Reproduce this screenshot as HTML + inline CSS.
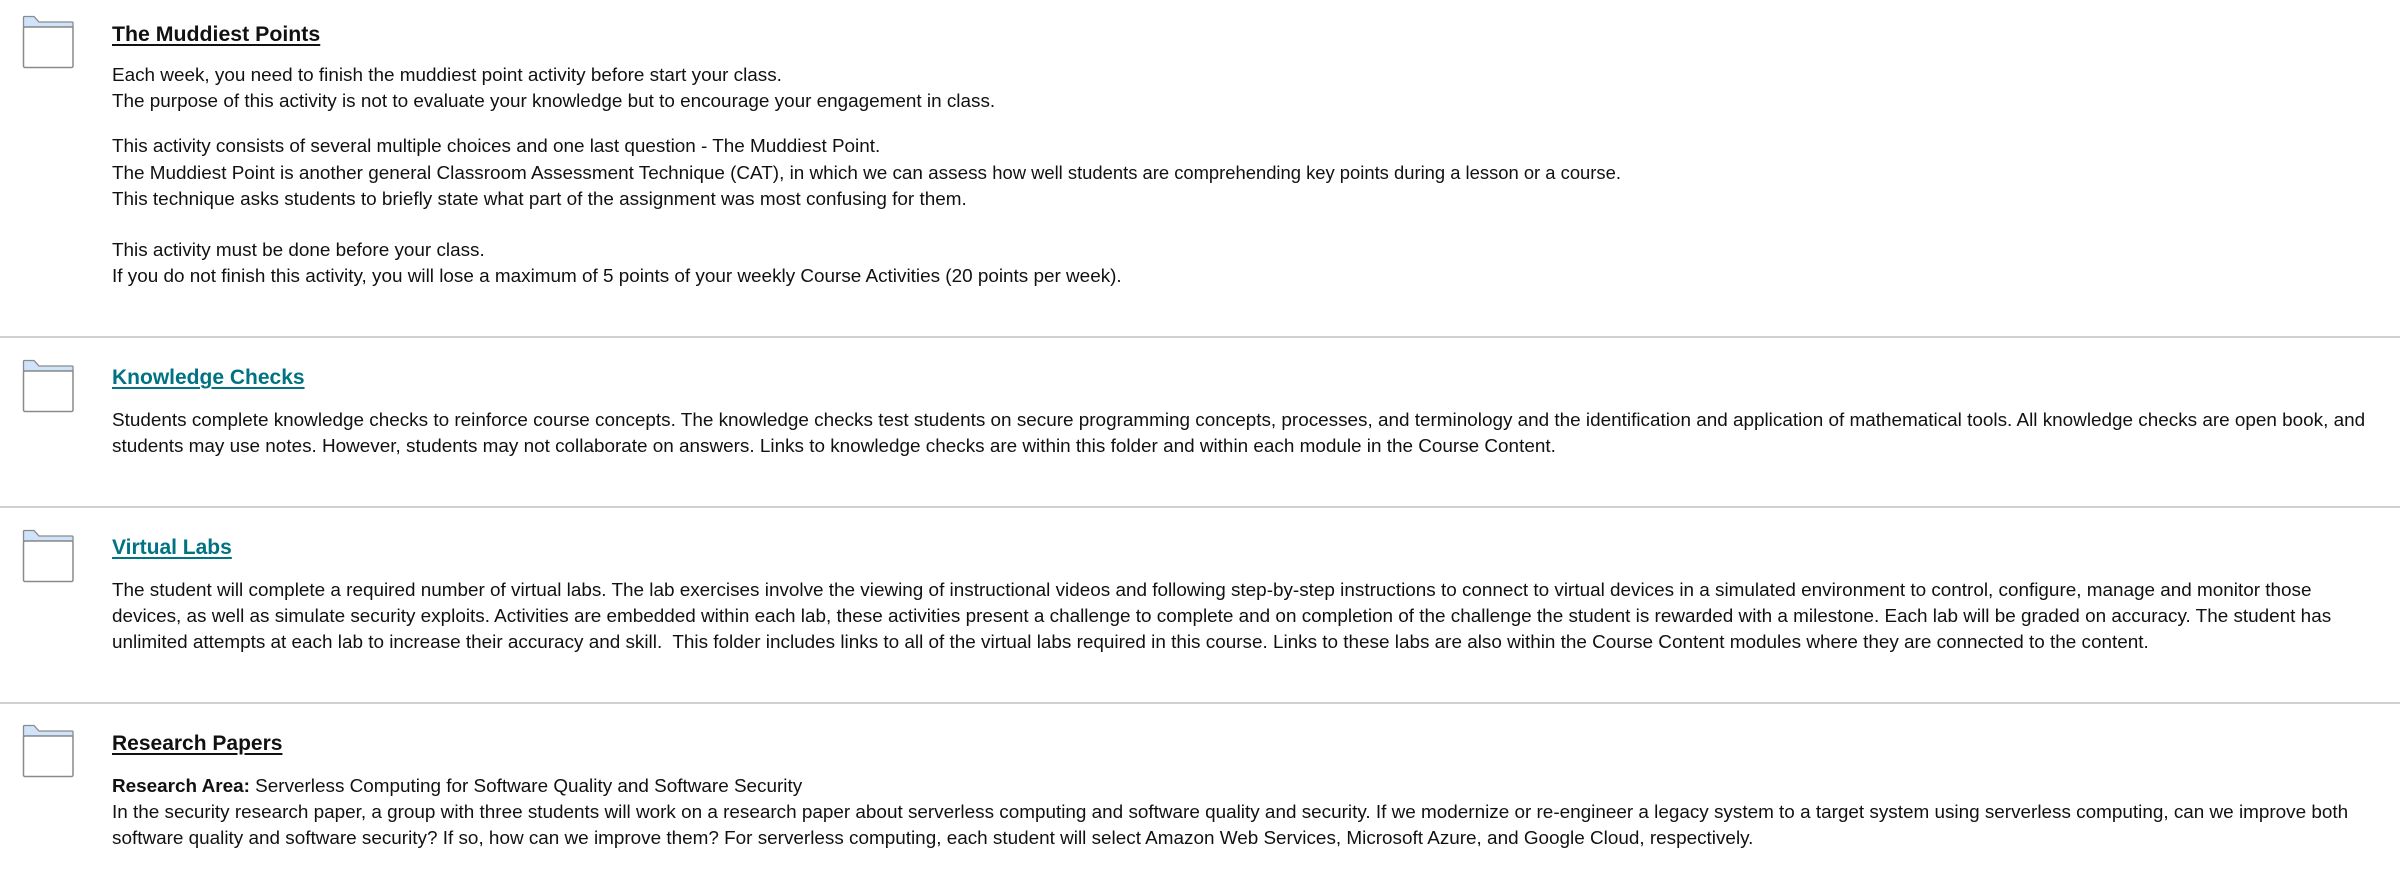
<!DOCTYPE html>
<html><head><meta charset="utf-8"><style>
body{margin:0;width:2400px;height:878px;background:#fff;font-family:"Liberation Sans",sans-serif;color:#111;position:relative;overflow:hidden}
.ic{position:absolute;left:22px;width:52px;height:54px}
.t{position:absolute;left:112px;font-weight:bold;font-size:21px;text-decoration:underline;white-space:nowrap;line-height:26px;text-underline-offset:3px}
.t.l{color:#007383}
.p{position:absolute;left:112px;font-size:18.9px;line-height:26px;white-space:nowrap}
.hr{position:absolute;left:0;width:2400px;height:2px;background:#d0d0d0}
.ar{font-size:18.4px}
</style></head><body>
<svg width="0" height="0" style="position:absolute"><defs><g id="f"><path d="M1.5 12 V2.5 Q1.5 1.5 2.5 1.5 H12 L17 7 H50 Q51 7 51 8 V12 Z" fill="#cfe3fb" stroke="#8a8a8a" stroke-width="1.3"/><rect x="1.5" y="12" width="49.5" height="40.5" rx="1.5" fill="#fff" stroke="#8a8a8a" stroke-width="1.5"/></g></defs></svg>

<svg class="ic" style="top:15px" viewBox="0 0 52 54"><use href="#f"/></svg>
<div class="t" style="top:21px;font-size:21.3px">The Muddiest Points</div>
<div class="p" style="top:63px">Each week, you need to finish the muddiest point activity before start your class.<br>The purpose of this activity is not to evaluate your knowledge but to encourage your engagement in class.</div>
<div class="p" style="top:134px">This activity consists of several multiple choices and one last question - The Muddiest Point.<br>The Muddiest Point is another general Classroom Assessment Technique (CAT), in which we can assess <span class="ar">how well students are comprehending key points during a lesson or a course.</span><br>This technique asks students to briefly state what part of the assignment was most confusing for them.</div>
<div class="p" style="top:238px">This activity must be done before your class.<br>If you do not finish this activity, you will lose a maximum of 5 points of your weekly Course Activities (20 points per week).</div>
<div class="hr" style="top:336px"></div>

<svg class="ic" style="top:359px" viewBox="0 0 52 54"><use href="#f"/></svg>
<div class="t l" style="top:365px">Knowledge Checks</div>
<div class="p" style="top:408px">Students complete knowledge checks to reinforce course concepts. The knowledge checks test students on secure programming concepts, processes, and terminology and the identification and application of mathematical tools. All knowledge checks are open book, and<br>students may use notes. However, students may not collaborate on answers. Links to knowledge checks are within this folder and within each module in the Course Content.</div>
<div class="hr" style="top:506px"></div>

<svg class="ic" style="top:529px" viewBox="0 0 52 54"><use href="#f"/></svg>
<div class="t l" style="top:535px">Virtual Labs</div>
<div class="p" style="top:578px">The student will complete a required number of virtual labs. The lab exercises involve the viewing of instructional videos and following step-by-step instructions to connect to virtual devices in a simulated environment to control, configure, manage and monitor those<br>devices, as well as simulate security exploits. Activities are embedded within each lab, these activities present a challenge to complete and on completion of the challenge the student is rewarded with a milestone. Each lab will be graded on accuracy. The student has<br>unlimited attempts at each lab to increase their accuracy and skill.&nbsp; This folder includes links to all of the virtual labs required in this course. Links to these labs are also within the Course Content modules where they are connected to the content.</div>
<div class="hr" style="top:702px"></div>

<svg class="ic" style="top:724px" viewBox="0 0 52 54"><use href="#f"/></svg>
<div class="t" style="top:731px">Research Papers</div>
<div class="p" style="top:774px"><b>Research Area:</b> Serverless Computing for Software Quality and Software Security<br>In the security research paper, a group with three students will work on a research paper about serverless computing and software quality and security. If we modernize or re-engineer a legacy system to a target system using serverless computing, can we improve both<br>software quality and software security? If so, how can we improve them? For serverless computing, each student will select Amazon Web Services, Microsoft Azure, and Google Cloud, respectively.</div>
</body></html>
